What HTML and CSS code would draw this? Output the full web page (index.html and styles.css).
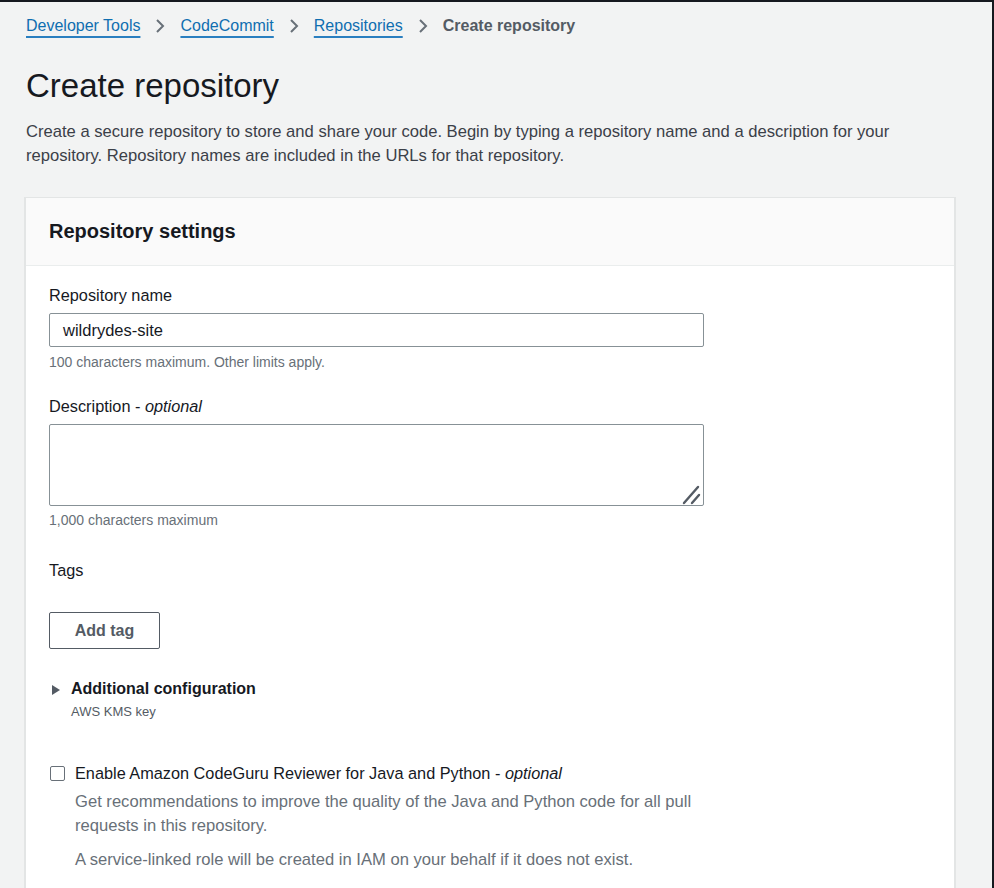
FILE: index.html
```html
<!DOCTYPE html>
<html lang="en">
<head>
<meta charset="utf-8">
<title>Create repository</title>
<link rel="stylesheet" href="styles.css">
</head>
<body>
<div class="frame">
  <nav class="crumbs">
    <a class="crumb" href="#">Developer Tools</a>
    <svg class="chev" viewBox="0 0 12 16" width="12" height="16"><path d="M3 2 L9 8 L3 14" fill="none" stroke="#687078" stroke-width="2"/></svg>
    <a class="crumb" href="#">CodeCommit</a>
    <svg class="chev" viewBox="0 0 12 16" width="12" height="16"><path d="M3 2 L9 8 L3 14" fill="none" stroke="#687078" stroke-width="2"/></svg>
    <a class="crumb" href="#">Repositories</a>
    <svg class="chev" viewBox="0 0 12 16" width="12" height="16"><path d="M3 2 L9 8 L3 14" fill="none" stroke="#687078" stroke-width="2"/></svg>
    <span class="crumb-current">Create repository</span>
  </nav>

  <h1 class="title">Create repository</h1>
  <p class="lead">Create a secure repository to store and share your code. Begin by typing a repository name and a description for your repository. Repository names are included in the URLs for that repository.</p>

  <section class="card">
    <header class="card-head">
      <h2 class="card-title">Repository settings</h2>
    </header>
    <div class="card-body">
      <label class="label">Repository name</label>
      <div class="input">wildrydes-site</div>
      <div class="hint">100 characters maximum. Other limits apply.</div>

      <label class="label label-gap">Description - <i>optional</i></label>
      <div class="textarea">
        <svg class="grip" viewBox="0 0 20 22" width="20" height="22"><path d="M2 20 L16 4 M10 20 L17 12" stroke="#545b64" stroke-width="2.4" stroke-linecap="round"/></svg>
      </div>
      <div class="hint hint-tight">1,000 characters maximum</div>

      <div class="label tags">Tags</div>
      <button class="btn" type="button">Add tag</button>

      <div class="expander">
        <svg class="tri" viewBox="0 0 10 12" width="10" height="12"><path d="M1 1 L9 6 L1 11 Z" fill="#545b64"/></svg>
        <div>
          <div class="exp-title">Additional configuration</div>
          <div class="exp-sub">AWS KMS key</div>
        </div>
      </div>

      <div class="check-row">
        <span class="box"></span>
        <div>
          <div class="check-label">Enable Amazon CodeGuru Reviewer for Java and Python - <i>optional</i></div>
          <p class="check-desc">Get recommendations to improve the quality of the Java and Python code for all pull requests in this repository.</p>
          <p class="check-desc check-note">A service-linked role will be created in IAM on your behalf if it does not exist.</p>
        </div>
      </div>
    </div>
  </section>
</div>
</body>
</html>
```

FILE: styles.css
```css
html, body {
  margin: 0;
  padding: 0;
  height: 100%;
  overflow: hidden;
}
body {
  background: #f2f3f3;
  font-family: "Liberation Sans", Arial, sans-serif;
  color: #16191f;
}
.frame {
  box-sizing: border-box;
  height: 888px;
  border-top: 2px solid #16191f;
  border-right: 2px solid #16191f;
  padding: 14px 0 0 26px;
  overflow: hidden;
}
.crumbs {
  display: flex;
  align-items: center;
  gap: 14px;
  height: 20px;
  font-size: 16px;
  line-height: 20px;
}
.crumb {
  color: #0f6eb0;
  text-decoration: underline;
  text-decoration-thickness: 2px;
  text-underline-offset: 5px;
  text-decoration-color: #2a7fc0;
}
.chev { flex: none; }
.crumb-current {
  color: #545b64;
  font-weight: bold;
}
.title {
  margin: 30px 0 0;
  font-size: 33px;
  line-height: 40px;
  font-weight: normal;
  color: #16191f;
}
.lead {
  margin: 14px 0 0;
  width: 880px;
  font-size: 16.6px;
  line-height: 24px;
  color: #3b4048;
}
.card {
  margin-top: 30px;
  width: 928px;
  background: #fff;
  box-shadow: -1px 0 0 1px #e3e5e5, 1px 0 0 1px #e3e5e5;
  min-height: 800px;
}
.card-head {
  background: #fafafa;
  border-bottom: 1px solid #eaeded;
  padding: 21px 23px 22px;
}
.card-title {
  margin: 0;
  font-size: 20px;
  line-height: 24px;
  font-weight: bold;
  color: #16191f;
}
.card-body {
  padding: 18px 23px 0;
}
.label {
  display: block;
  font-size: 16.3px;
  line-height: 22px;
  color: #16191f;
}
.label-gap { margin-top: 25px; }
.input {
  box-sizing: border-box;
  margin-top: 7px;
  width: 655px;
  height: 34px;
  border: 1px solid #879196;
  border-radius: 2px;
  padding: 0 13px;
  font-size: 16.5px;
  line-height: 32px;
  color: #16191f;
}
.hint {
  margin-top: 7px;
  font-size: 14px;
  line-height: 16px;
  color: #687078;
}
.hint-tight { margin-top: 6px; }
.textarea {
  box-sizing: border-box;
  position: relative;
  margin-top: 7px;
  width: 655px;
  height: 82px;
  border: 1px solid #879196;
  border-radius: 2px;
}
.grip {
  position: absolute;
  right: 1px;
  bottom: 0;
}
.tags { margin-top: 31px; }
.btn {
  display: block;
  box-sizing: border-box;
  margin-top: 31px;
  width: 111px;
  height: 37px;
  border: 1px solid #545b64;
  border-radius: 2px;
  background: #fff;
  font-family: inherit;
  font-size: 16px;
  font-weight: bold;
  color: #545b64;
  padding: 0;
}
.expander {
  display: flex;
  align-items: flex-start;
  gap: 10px;
  margin-top: 29px;
  padding-left: 2px;
}
.tri { margin-top: 6px; flex: none; }
.exp-title {
  font-size: 16px;
  line-height: 22px;
  font-weight: bold;
  color: #16191f;
}
.exp-sub {
  margin-top: 4px;
  font-size: 13px;
  line-height: 16px;
  color: #545b64;
}
.check-row {
  display: flex;
  align-items: flex-start;
  gap: 10px;
  margin-top: 42px;
  padding-left: 1px;
}
.box {
  flex: none;
  box-sizing: border-box;
  width: 15px;
  height: 15px;
  margin-top: 4px;
  border: 1px solid #687078;
  border-radius: 2px;
  background: #fff;
}
.check-label {
  font-size: 16.3px;
  line-height: 22px;
  color: #16191f;
}
.check-desc {
  margin: 6px 0 0;
  width: 640px;
  font-size: 16.6px;
  line-height: 24px;
  color: #687078;
}
.check-note { margin-top: 10px; }
```
